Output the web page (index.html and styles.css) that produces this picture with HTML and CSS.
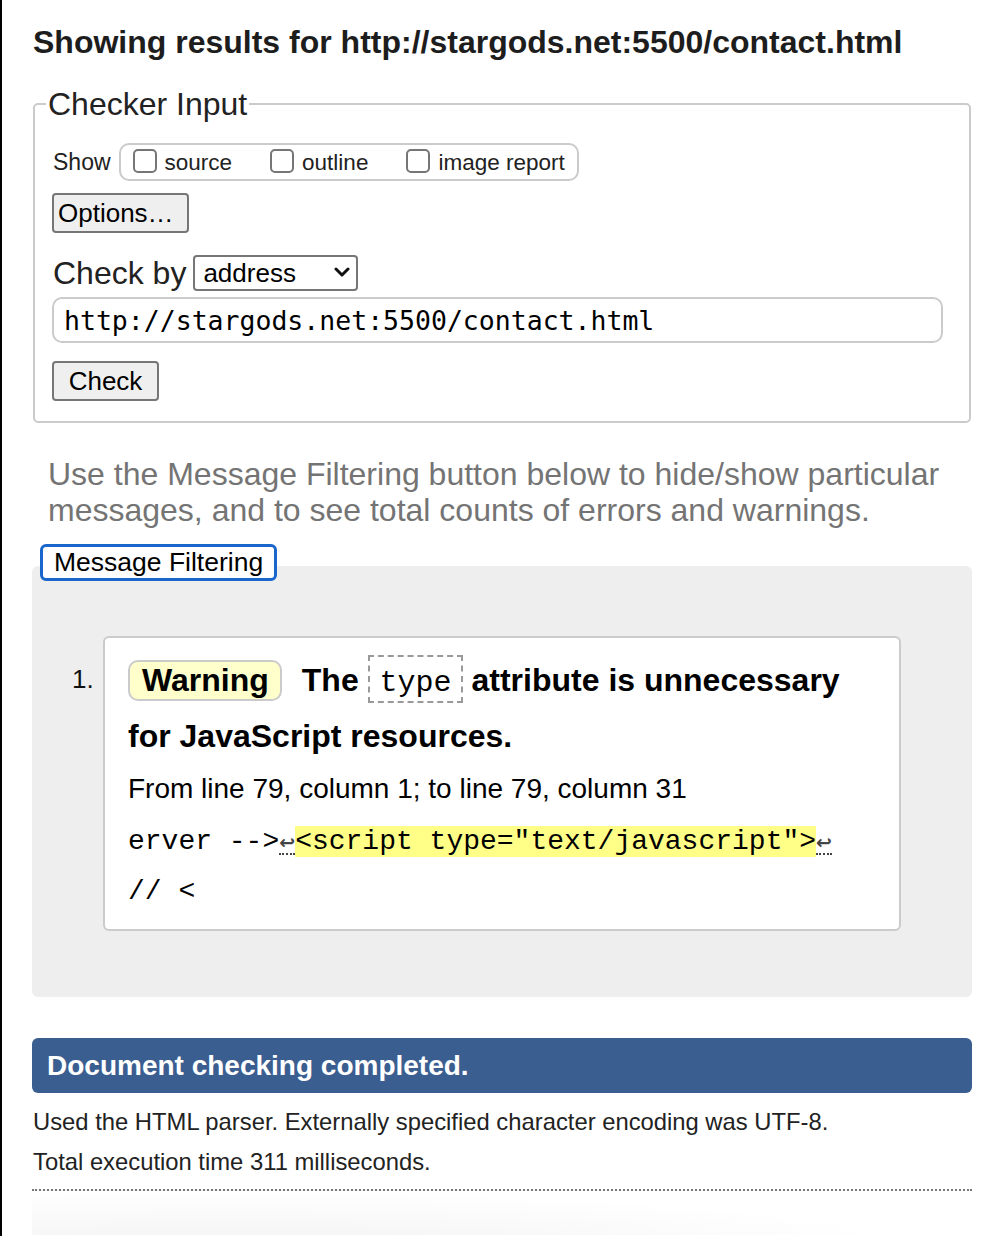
FILE: index.html
```html
<!DOCTYPE html>
<html lang="en">
<head>
<meta charset="utf-8">
<title>Nu Html Checker</title>
<link rel="stylesheet" href="styles.css">
</head>
<body>
<h2 class="title">Showing results for http://stargods.net:5500/contact.html</h2>

<fieldset class="checker">
  <legend class="checker-legend">Checker Input</legend>
  <div class="show-row">
    <span class="show-label">Show</span>
    <div class="show-box">
      <label class="cb"><input type="checkbox" class="cb-input"><span>source</span></label>
      <label class="cb"><input type="checkbox" class="cb-input"><span>outline</span></label>
      <label class="cb"><input type="checkbox" class="cb-input"><span>image report</span></label>
    </div>
  </div>
  <button class="btn btn-options" type="button">Options…</button>
  <div class="checkby-row">
    <span class="checkby-label">Check by</span>
    <span class="select-wrap">
      <select class="select"><option>address</option></select>
      <svg class="chevron" width="16" height="11" viewBox="0 0 16 11"><path d="M2 2 L8 8 L14 2" fill="none" stroke="#111" stroke-width="3" stroke-linecap="round" stroke-linejoin="round"/></svg>
    </span>
  </div>
  <input class="url" type="text" value="http://stargods.net:5500/contact.html">
  <button class="btn btn-check" type="button">Check</button>
</fieldset>

<p class="hint">Use the Message Filtering button below to hide/show particular messages, and to see total counts of errors and warnings.</p>

<button class="filter-btn" type="button">Message Filtering</button>
<div class="results">
  <div class="msg-row">
    <span class="msg-num">1.</span>
    <div class="msg-card">
      <p class="msg-text"><strong class="badge">Warning</strong>The <code class="attr">type</code> attribute is unnecessary for JavaScript resources.</p>
      <p class="msg-loc">From line 79, column 1; to line 79, column 31</p>
      <div class="extract"><div>erver --&gt;<span class="lf">↩</span><mark class="hl">&lt;script type="text/javascript"&gt;</mark><span class="lf">↩</span></div><div>// &lt;</div></div>
    </div>
  </div>
</div>

<p class="done">Document checking completed.</p>
<p class="info">Used the HTML parser. Externally specified character encoding was UTF-8.</p>
<p class="info">Total execution time 311 milliseconds.</p>
<div class="footer"></div>
</body>
</html>
```
FILE: styles.css
```css
html {
  border-left: 2px solid #000;
  background: #fff;
}
body {
  margin: 0;
  padding: 0 28px 0 30px;
  font-family: "Liberation Sans", Arial, sans-serif;
  color: #222;
  min-height: 1236px;
  box-sizing: border-box;
}
.title {
  margin: 24px 0 27px 1px;
  font-size: 32px;
  line-height: 37px;
  font-weight: bold;
  color: #1d1d1d;
}
.checker {
  margin: 0 1px;
  padding: 23px 17px 20px 17px;
  border: 2px solid #cbcbcb;
  border-radius: 5px;
  display: flex;
  flex-direction: column;
  align-items: flex-start;
}
.checker-legend {
  font-size: 32px;
  line-height: 32px;
  padding: 0 2px;
  margin-left: -6px;
  color: #222;
}
.show-row {
  display: flex;
  align-items: center;
  gap: 8px;
  margin-left: 1px;
}
.show-label {
  font-size: 23px;
}
.show-box {
  display: flex;
  align-items: center;
  gap: 38px;
  height: 38px;
  box-sizing: border-box;
  padding: 0 12px;
  border: 2px solid #cbcbcb;
  border-radius: 10px;
}
.cb {
  display: flex;
  align-items: center;
  gap: 8px;
  font-size: 22.5px;
  line-height: 26px;
}
.cb span {
  position: relative;
  top: 1px;
}
.cb-input {
  appearance: none;
  -webkit-appearance: none;
  width: 24px;
  height: 24px;
  margin: 0;
  border: 2px solid #767676;
  border-radius: 5px;
  background: #fff;
  box-sizing: border-box;
  position: relative;
  top: -1px;
}
.btn {
  font-family: "Liberation Sans", Arial, sans-serif;
  font-size: 26px;
  color: #000;
  background: #efefef;
  border: 2px solid #767676;
  border-radius: 4px;
  height: 40px;
  box-sizing: border-box;
  margin: 0;
}
.btn-options {
  margin-top: 12px;
  padding: 0 13px 0 4px;
}
.checkby-row {
  margin-top: 22px;
  display: flex;
  align-items: center;
  gap: 7px;
  margin-left: 1px;
}
.checkby-label {
  font-size: 32px;
  line-height: 36px;
}
.select-wrap {
  position: relative;
  display: inline-block;
}
.select {
  appearance: none;
  -webkit-appearance: none;
  width: 165px;
  height: 36px;
  box-sizing: border-box;
  border: 2px solid #767676;
  border-radius: 4px;
  background: #fff;
  font-family: "Liberation Sans", Arial, sans-serif;
  font-size: 26px;
  color: #000;
  padding: 0 0 0 8px;
  margin: 0;
}
.chevron {
  position: absolute;
  left: 141px;
  top: 12px;
  pointer-events: none;
}
.url {
  margin-top: 6px;
  width: 891px;
  height: 46px;
  box-sizing: border-box;
  border: 2px solid #cbcbcb;
  border-radius: 10px;
  padding: 0 10px;
  font-family: "DejaVu Sans Mono", monospace;
  font-size: 26.5px;
  color: #000;
  background: #fff;
}
.btn-check {
  margin-top: 18px;
  width: 107px;
  padding: 0;
}
.hint {
  margin: 33px 0 0;
  padding-left: 16px;
  font-size: 32px;
  line-height: 36px;
  color: #747474;
}
.filter-btn {
  position: relative;
  z-index: 1;
  display: block;
  margin: 16px 0 -15px 8px;
  height: 37px;
  box-sizing: border-box;
  padding: 0 11px;
  border: 3px solid #1b66cc;
  border-radius: 6px;
  background: #fff;
  font-family: "Liberation Sans", Arial, sans-serif;
  font-size: 26.5px;
  color: #000;
}
.results {
  background: #eeeeee;
  border-radius: 6px;
  padding: 70px 71px 66px 40px;
}
.msg-row {
  display: flex;
  align-items: flex-start;
}
.msg-num {
  width: 31px;
  flex: none;
  font-size: 26px;
  line-height: 26px;
  margin-top: 30px;
  color: #111;
}
.msg-card {
  flex: 1;
  background: #fff;
  border: 2px solid #cbcbcb;
  border-radius: 6px;
  padding: 14px 20px 13px 23px;
}
.msg-text {
  margin: 0;
  font-size: 32px;
  line-height: 56px;
  font-weight: bold;
  color: #000;
}
.badge {
  display: inline-block;
  line-height: 37px;
  background: #ffffcc;
  border: 2px solid #cbcbcb;
  border-radius: 10px;
  padding: 0 11px 0 12px;
  margin-right: 20px;
}
.attr {
  display: inline-block;
  line-height: 36px;
  font-family: "Liberation Mono", "Courier New", monospace;
  font-weight: normal;
  font-size: 30px;
  border: 2px dashed #999;
  padding: 8px 9px 0 10px;
}
.msg-loc {
  margin: 5px 0 0;
  font-size: 28px;
  line-height: 40px;
  color: #000;
}
.extract {
  margin-top: 8px;
  font-family: "Liberation Mono", "Courier New", monospace;
  font-size: 28px;
  line-height: 49px;
  color: #000;
  white-space: pre;
}
.lf {
  font-family: "DejaVu Sans", sans-serif;
  font-size: 19px;
  font-weight: bold;
  color: #444;
  border-bottom: 2px dotted #444;
}
.hl {
  background: #ffff88;
  color: #000;
}
.done {
  margin: 41px 0 0;
  height: 55px;
  line-height: 55px;
  padding: 0 15px;
  background: #3b5e91;
  border-radius: 6px;
  color: #fff;
  font-size: 28px;
  font-weight: bold;
}
.done + .info {
  margin-top: 9px;
}
.info {
  margin: 0 0 0 1px;
  font-size: 23.8px;
  line-height: 40px;
  color: #222;
}
.footer {
  margin-top: 7px;
  border-top: 2px dotted #777;
  height: 44px;
  background: radial-gradient(ellipse 700px 60px at 200px 60px, #f2f2f2, #fff);
}
```
